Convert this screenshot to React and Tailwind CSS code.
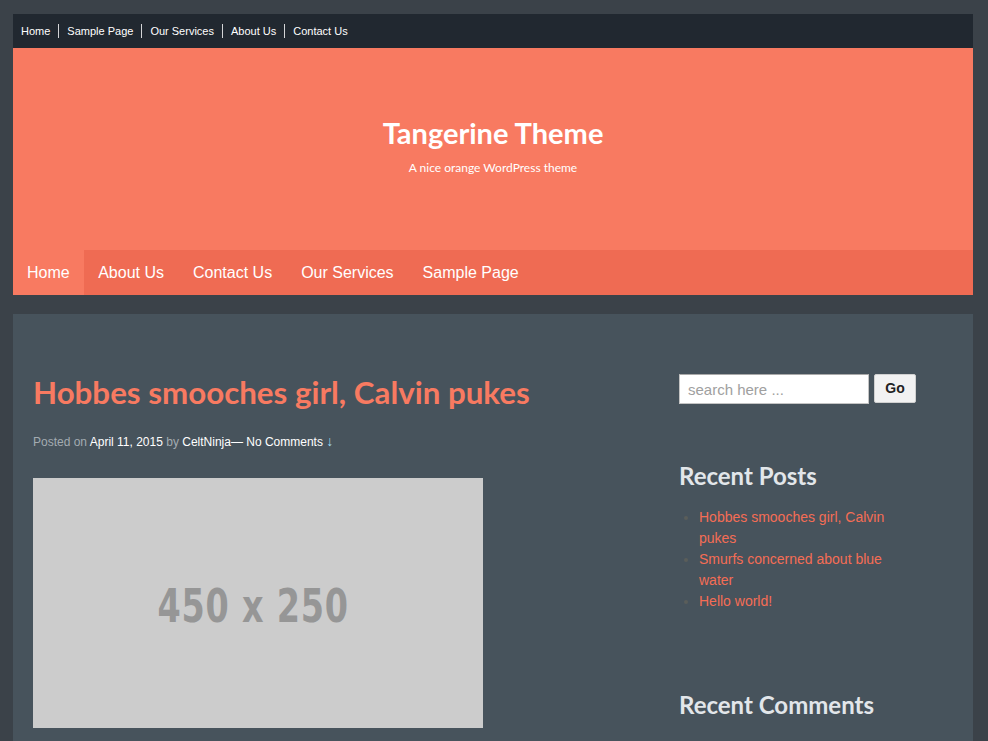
import React from 'react';

const lato = { fontFamily: 'Lato, "Noto Sans", sans-serif' };

export default function App() {
    const topLinks = ['Home', 'Sample Page', 'Our Services', 'About Us', 'Contact Us'];
    const navLinks = ['Home', 'About Us', 'Contact Us', 'Our Services', 'Sample Page'];
    const recent = ['Hobbes smooches girl, Calvin pukes', 'Smurfs concerned about blue water', 'Hello world!'];

    return (
        <div className="h-[741px] overflow-hidden bg-[#3b4249] pt-[14px] font-['Liberation_Sans',Arial,sans-serif]">
            <div className="w-[960px] ml-[13px]">
                {/* TOP BAR */}
                <div className="h-[34px] bg-[#212830] flex items-center pl-[8px]">
                    {topLinks.map((l, i) => (
                        <span key={l} className={`text-[11px] text-white leading-[14px] pr-[8px] ${i > 0 ? 'pl-[8px] border-l border-white/80' : ''}`}>{l}</span>
                    ))}
                </div>

                {/* HEADER */}
                <div className="h-[202px] bg-[#f87a61] flex flex-col items-center pt-[67px]">
                    <h1 className="text-[29px] font-bold text-white leading-[35px]" style={lato}>Tangerine Theme</h1>
                    <p className="text-[12px] text-white mt-[10px] leading-[16px]" style={lato}>A nice orange WordPress theme</p>
                </div>

                {/* NAV */}
                <div className="h-[45px] bg-[#ef6b53] flex">
                    {navLinks.map((l, i) => (
                        <span key={l} className={`h-full flex items-center text-[16px] text-white ${i === 0 ? 'bg-[#f87a61] pl-[14px] pr-[14px]' : 'px-[14.5px]'}`}>{l}</span>
                    ))}
                </div>

                {/* CONTENT */}
                <div className="mt-[19px] bg-[#47535c] h-[500px] flex px-[20px]">
                    <div className="w-[646px] pt-[58px]">
                        <h2 className="text-[31.3px] font-bold text-[#f87a61] leading-[40px]" style={lato}>Hobbes smooches girl, Calvin pukes</h2>
                        <p className="text-[12px] mt-[21px] leading-[16px] text-[#a3abb1]">
                            Posted on <span className="text-white">April 11, 2015</span> by <span className="text-white">CeltNinja</span><span className="text-white">— No Comments</span> <span className="text-[#9fd8f0] font-bold text-[14px]">↓</span>
                        </p>
                        <div className="mt-[28px] w-[450px] h-[250px] bg-[#cccccc] flex items-center justify-center">
                            <span className="mr-[10px] mt-[6px] text-[#969696] text-[47px] font-bold tracking-[1px] scale-x-[0.79] font-['DejaVu_Sans_Condensed',sans-serif]">450 x 250</span>
                        </div>
                    </div>

                    {/* SIDEBAR */}
                    <div className="w-[240px] pt-[60px]">
                        <div className="flex gap-[5px]">
                            <input readOnly placeholder="search here ..." className="w-[190px] h-[30px] bg-white border border-[#c4c4c4] border-t-[#a9a9a9] px-[8px] text-[15px] placeholder-[#a0a0a0] outline-none" />
                            <button className="w-[42px] h-[29px] bg-[#f2f2f2] border border-[#d0d0d0] rounded-[2px] text-[14px] font-bold text-[#222]">Go</button>
                        </div>
                        <h3 className="mt-[57px] text-[24px] font-bold text-[#e2e6ea] leading-[30px]" style={lato}>Recent Posts</h3>
                        <ul className="mt-[16px] pl-[20px] list-disc marker:text-[#5a5e5a] text-[14px] leading-[21px] text-[#f56d55] w-[225px]">
                            {recent.map(r => <li key={r}>{r}</li>)}
                        </ul>
                        <h3 className="mt-[78px] text-[24px] font-bold text-[#e2e6ea] leading-[30px]" style={lato}>Recent Comments</h3>
                    </div>
                </div>
            </div>
        </div>
    );
}
